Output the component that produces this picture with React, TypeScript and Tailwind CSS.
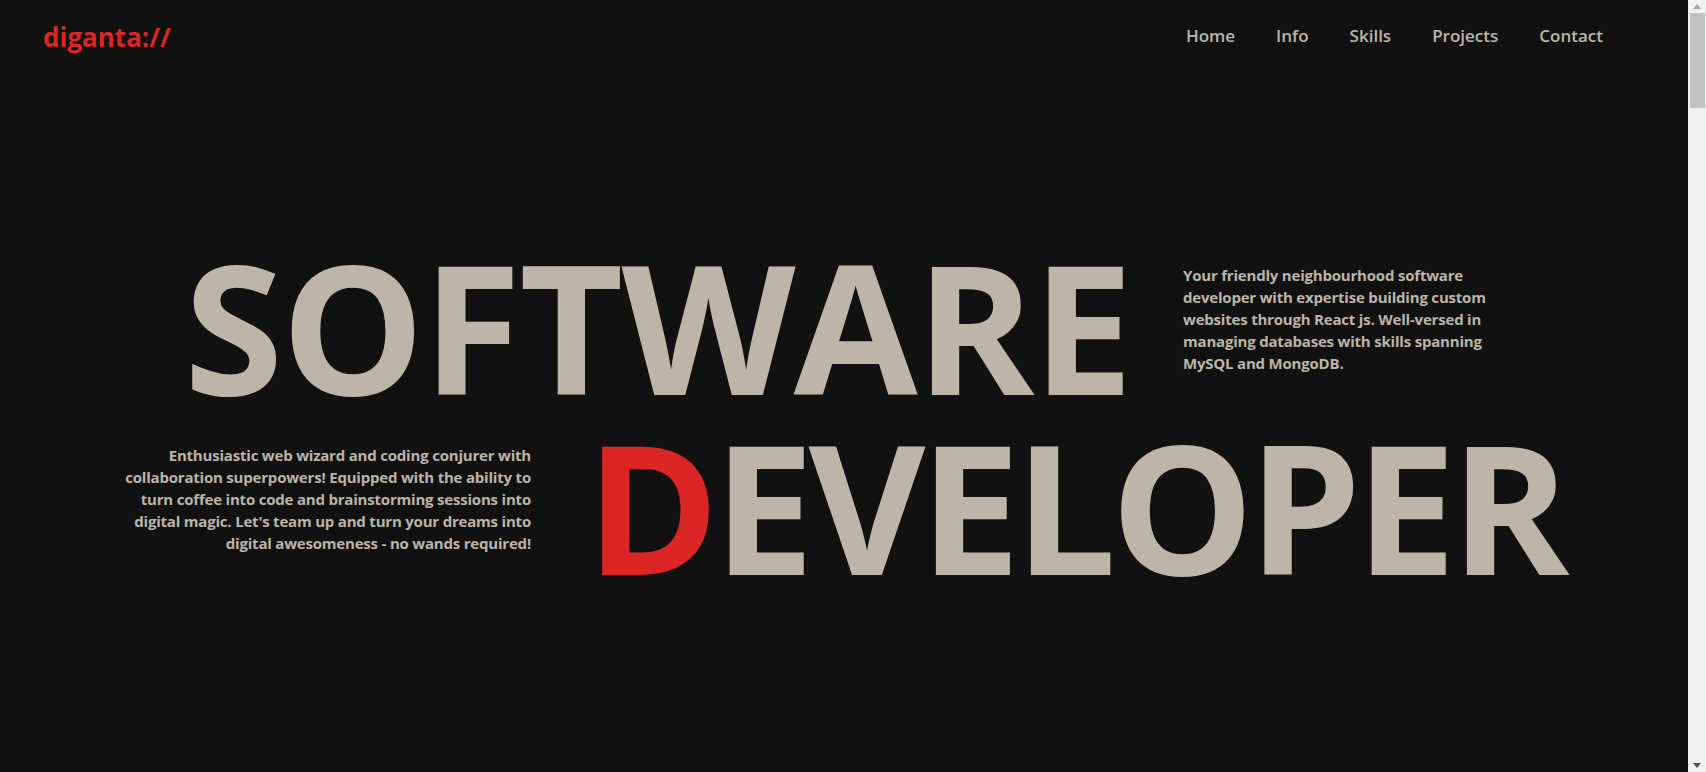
import React from "react";

const FONT = { fontFamily: '"Open Sans", "Noto Sans", Arial, sans-serif' };

export default function App() {
  return (
    <div className="h-screen w-full flex bg-[#111111] overflow-hidden" style={FONT}>
      <div className="flex-1 flex flex-col min-w-0">
        <header className="h-[80px] flex items-start justify-between pl-[43px] pr-[85px] pt-[24px]">
          <a className="text-[26px] leading-none font-bold text-[#dc2626]">diganta://</a>
          <nav className="flex gap-[41px] mt-[3px] text-[17px] leading-none font-semibold text-[#bdb6aa]">
            <a>Home</a>
            <a>Info</a>
            <a>Skills</a>
            <a>Projects</a>
            <a>Contact</a>
          </nav>
        </header>
        <main className="flex flex-col pt-[156px] text-[#bdb5a8]">
          <div className="flex items-start pl-[184px]">
            <h1 className="w-[999px] shrink-0 text-[180px] leading-none font-bold tracking-[-2px] whitespace-nowrap">
              SOFTWARE
            </h1>
            <p className="mt-[28px] text-[15px] leading-[22px] font-bold tracking-[-0.2px] whitespace-nowrap">
              Your friendly neighbourhood software
              <br />
              developer with expertise building custom
              <br />
              websites through React js. Well-versed in
              <br />
              managing databases with skills spanning
              <br />
              MySQL and MongoDB.
            </p>
          </div>
          <div className="flex items-start">
            <p className="w-[531px] shrink-0 mt-[28px] text-right text-[15px] leading-[22px] font-bold tracking-[-0.2px] whitespace-nowrap">
              Enthusiastic web wizard and coding conjurer with
              <br />
              collaboration superpowers! Equipped with the ability to
              <br />
              turn coffee into code and brainstorming sessions into
              <br />
              digital magic. Let's team up and turn your dreams into
              <br />
              digital awesomeness - no wands required!
            </p>
            <h1 className="ml-[55px] text-[180px] leading-none font-bold tracking-[-5.75px] whitespace-nowrap">
              <span className="text-[#dc2626]">D</span>EVELOPER
            </h1>
          </div>
        </main>
      </div>
      <div className="w-[18px] shrink-0 bg-[#f1f1f1] flex flex-col">
        <div className="h-[13px] flex items-center justify-center">
          <svg width="8" height="5" viewBox="0 0 8 5">
            <polygon points="4,0 8,5 0,5" fill="#a3a3a3" />
          </svg>
        </div>
        <div className="pl-[2px] pr-[1px]">
          <div className="h-[95px] bg-[#c1c1c1]" />
        </div>
        <div className="flex-1" />
        <div className="h-[13px] flex items-center justify-center">
          <svg width="8" height="5" viewBox="0 0 8 5">
            <polygon points="0,0 8,0 4,5" fill="#505050" />
          </svg>
        </div>
      </div>
    </div>
  );
}
